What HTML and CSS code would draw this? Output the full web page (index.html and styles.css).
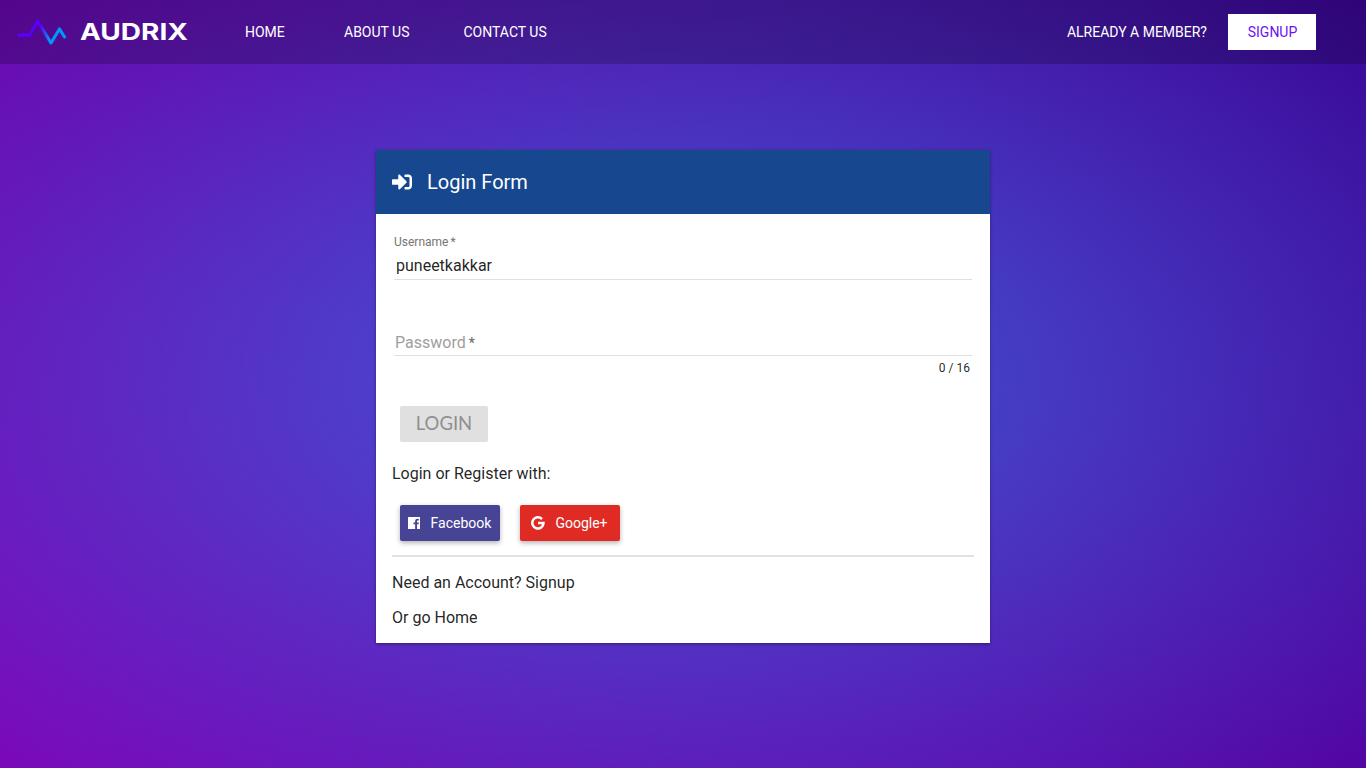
FILE: index.html
```html
<!DOCTYPE html>
<html lang="en">
<head>
<meta charset="utf-8">
<title>Audrix</title>
<link rel="stylesheet" href="styles.css">
</head>
<body>
<header class="navbar">
  <a class="brand">
    <svg class="brand-mark" width="50" height="28" viewBox="0 0 50 28">
      <defs><linearGradient id="wave" gradientUnits="userSpaceOnUse" x1="24" y1="0" x2="32" y2="0"><stop offset="0" stop-color="#5a00fa"/><stop offset="1" stop-color="#0096fa"/></linearGradient></defs>
      <path d="M2 18.200H12.500L20.500 4.200L34 26L42.500 12L47.500 20" fill="none" stroke="url(#wave)" stroke-width="3.2" stroke-linecap="round" stroke-linejoin="round"/>
    </svg>
    <svg class="brand-name" width="112" height="30" viewBox="0 0 112 30"><text x="0" y="22.500" textLength="108" lengthAdjust="spacingAndGlyphs">AUDRIX</text></svg>
  </a>
  <nav class="links">
    <a class="link home">HOME</a>
    <a class="link about">ABOUT US</a>
    <a class="link contact">CONTACT US</a>
  </nav>
  <span class="link member">ALREADY A MEMBER?</span>
  <a class="signup">SIGNUP</a>
</header>
<main class="card">
  <div class="card-head">
    <svg width="20" height="20" viewBox="0 0 512 512" fill="#fff"><path d="M416 448h-84c-6.600 0-12-5.400-12-12v-40c0-6.600 5.400-12 12-12h84c17.700 0 32-14.300 32-32V160c0-17.700-14.300-32-32-32h-84c-6.600 0-12-5.400-12-12V76c0-6.600 5.400-12 12-12h84c53 0 96 43 96 96v192c0 53-43 96-96 96zm-47-209L201 71c-15-15-41-4.500-41 17v96H24c-13.300 0-24 10.700-24 24v96c0 13.300 10.700 24 24 24h136v96c0 21.500 26 32 41 17l168-168c9.300-9.400 9.300-24.600 0-34z"/></svg>
    <span>Login Form</span>
  </div>
  <form class="card-body">
    <label class="field">
      <span class="label">Username <i>*</i></span>
      <span class="value">puneetkakkar</span>
    </label>
    <label class="field password">
      <span class="placeholder">Password <i>*</i></span>
    </label>
    <div class="count">0 / 16</div>
    <div class="login">LOGIN</div>
    <p class="with">Login or Register with:</p>
    <div class="social">
      <a class="btn facebook">
        <svg width="12" height="12" viewBox="0 0 12 12"><path fill="#fff" d="M.3 0H11.700Q12 0 12 .3V11.700Q12 12 11.700 12H9V7.350H10.600L10.850 5.550H9V4.400C9 3.850 9.200 3.500 9.900 3.500H10.850V1.900A12 12 0 0 0 9.450 1.830C8.100 1.830 7.150 2.650 7.150 4.200V5.550H5.500V7.350H7.150V12H.3Q0 12 0 11.700V.3Q0 0 .3 0Z"/></svg>
        <span>Facebook</span>
      </a>
      <a class="btn google">
        <svg width="14" height="14" viewBox="0 0 14 14"><path d="M11 3.100A5.600 5.600 0 1 0 12.500 7.100H7.100" fill="none" stroke="#fff" stroke-width="2.500"/></svg>
        <span>Google+</span>
      </a>
    </div>
    <hr class="rule">
    <p class="foot">Need an Account? Signup</p>
    <p class="foot">Or go Home</p>
  </form>
</main>
</body>
</html>
```
FILE: styles.css
```css
* { box-sizing: border-box; }
body {
  margin: 0;
  height: 768px;
  overflow: hidden;
  font-family: Roboto, sans-serif;
  color: rgba(0, 0, 0, .87);
  background:
    radial-gradient(ellipse farthest-corner at center, rgba(58, 104, 222, .84), rgba(58, 104, 222, 0)),
    linear-gradient(50deg, #7a08b9 4%, #6005aa 50%, #3c0597 96%);
}
.navbar {
  display: flex;
  align-items: center;
  height: 64px;
  padding: 0 50px 0 17px;
  background: rgba(0, 0, 0, .2);
  color: #fff;
}
.brand { display: flex; align-items: center; width: 228px; }
.brand-mark { margin-top: -2px; }
.brand-name { margin: -1px 0 0 13px; font: 700 23px Inter, sans-serif; fill: #fff; }
.links { display: flex; flex: 1; }
.link { font-size: 14px; white-space: nowrap; }
.home { width: 99px; }
.about { width: 119.5px; }
.member { margin-right: 21px; }
.signup {
  width: 88px;
  height: 36px;
  padding-left: 1px;
  line-height: 36px;
  text-align: center;
  font-size: 14px;
  background: #fff;
  color: #6a11f5;
}
.card {
  width: 614px;
  height: 493px;
  margin: 86px auto 0;
  background: #fff;
  box-shadow: 0 1px 3px rgba(0, 0, 0, .4);
}
.card-head {
  display: flex;
  align-items: center;
  gap: 15px;
  height: 64px;
  padding: 0 16px;
  background: #17478f;
  color: #fff;
  font-size: 20px;
}
.card-body { padding: 20px 16px 0; }
.field {
  display: flex;
  flex-direction: column;
  height: 46px;
  margin: 0 2px;
  border-bottom: 1px solid #e0e0e0;
}
i { font-style: normal; }
.label { font-size: 12px; line-height: 16px; color: #757575; }
.label i { margin-left: -1px; }
.value { margin-top: 6px; padding-left: 2px; font-size: 16px; line-height: 20px; }
.password { margin-top: 30px; justify-content: flex-end; }
.placeholder { padding: 0 1px 2px; font-size: 16px; line-height: 20px; color: #9e9e9e; }
.placeholder i { font-size: 14px; line-height: 1; color: #666; margin-left: -1px; }
.count { margin: 4px 4px 0; text-align: right; font-size: 12px; line-height: 16px; }
.login {
  width: 88px;
  height: 36px;
  margin: 30px 0 0 8px;
  border-radius: 2px;
  background: #e0e0e0;
  color: #8f8f8f;
  font: 18.5px/34px Lato, sans-serif;
  text-align: center;
}
.with { margin: 22px 0 0; font-size: 16px; line-height: 20px; }
.social { display: flex; gap: 20px; margin: 21px 8px 0; }
.btn {
  display: flex;
  align-items: center;
  justify-content: center;
  width: 100px;
  height: 36px;
  padding-right: 1px;
  gap: 11px;
  border-radius: 2px;
  color: #fff;
  font-size: 14px;
  box-shadow: 0 2px 5px rgba(0, 0, 0, .3);
}
.facebook { background: #474496; }
.google { gap: 10px; background: #df2b24; }
.rule { height: 2px; margin: 14px 0 16px; border: 0; background: #e1e1e1; }
.foot { margin: 0 0 15px; font-size: 16px; line-height: 20px; }
```
